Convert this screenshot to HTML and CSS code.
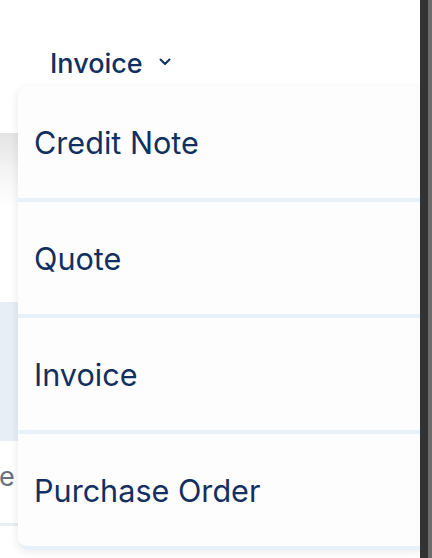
FILE: index.html
```html
<!DOCTYPE html>
<html lang="en">
<head>
<meta charset="utf-8">
<title>Document type</title>
<link rel="stylesheet" href="styles.css">
</head>
<body>
<div class="page">
  <header class="header">
    <button class="type-toggle">
      <span class="type-label">Invoice</span>
      <svg class="chevron" width="12" height="8" viewBox="0 0 12 8"><polyline points="1.5,1.5 6,6 10.5,1.5" fill="none" stroke="#12305f" stroke-width="2" stroke-linecap="round" stroke-linejoin="round"/></svg>
    </button>
  </header>
  <div class="toolbar"></div>
  <div class="row row-selected"></div>
  <div class="row row-text"><span class="cell-text">e</span></div>
  <div class="row-line"></div>

  <ul class="menu">
    <li class="menu-item">Credit Note</li>
    <li class="menu-item">Quote</li>
    <li class="menu-item">Invoice</li>
    <li class="menu-item">Purchase Order</li>
  </ul>

  <div class="edge"></div>
</div>
</body>
</html>
```
FILE: styles.css
```css
* { box-sizing: border-box; }
html, body {
  margin: 0;
  padding: 0;
  width: 432px;
  height: 558px;
  overflow: hidden;
  background: #ffffff;
  font-family: Inter, "Noto Sans", "Liberation Sans", sans-serif;
  color: #12305f;
}
.page {
  position: relative;
  width: 432px;
  height: 558px;
  overflow: hidden;
}
.header {
  height: 133px;
  padding: 47px 0 0 50px;
}
.type-toggle {
  display: flex;
  align-items: center;
  gap: 16px;
  border: 0;
  padding: 0;
  background: none;
  font: inherit;
  color: inherit;
}
.type-label {
  font-size: 27px;
  font-weight: 500;
  line-height: normal;
}
.chevron { display: block; margin-top: -4px; }
.toolbar {
  height: 169px;
  background: linear-gradient(#e4e4e4, #f6f6f6 25%, #ffffff 45%);
}
.row-selected {
  height: 139px;
  background: #e8eef6;
}
.row-text {
  height: 82px;
  padding-top: 19px;
  font-size: 27px;
  line-height: normal;
  color: #6b6f7a;
}
.cell-text { display: block; margin-left: -1px; }
.row-line {
  height: 3px;
  background: #e8eef6;
}
.menu {
  position: absolute;
  left: 18px;
  top: 86px;
  width: 412px;
  margin: 0;
  padding: 0;
  list-style: none;
  background: #fdfdfe;
  border-radius: 10px;
  box-shadow: -1px 2px 8px rgba(0, 0, 0, 0.08);
}
.menu-item {
  display: flex;
  align-items: center;
  height: 116px;
  padding-left: 16px;
  border-bottom: 4px solid #e8f0f8;
  font-size: 30.6px;
  font-weight: 400;
  line-height: normal;
}
.menu-item:last-child {
  border-bottom-left-radius: 10px;
}
.edge {
  position: absolute;
  top: 0;
  right: 0;
  width: 12px;
  height: 100%;
  background: linear-gradient(to right, #333333 0 8px, #6b6b6b 8px);
}
```
